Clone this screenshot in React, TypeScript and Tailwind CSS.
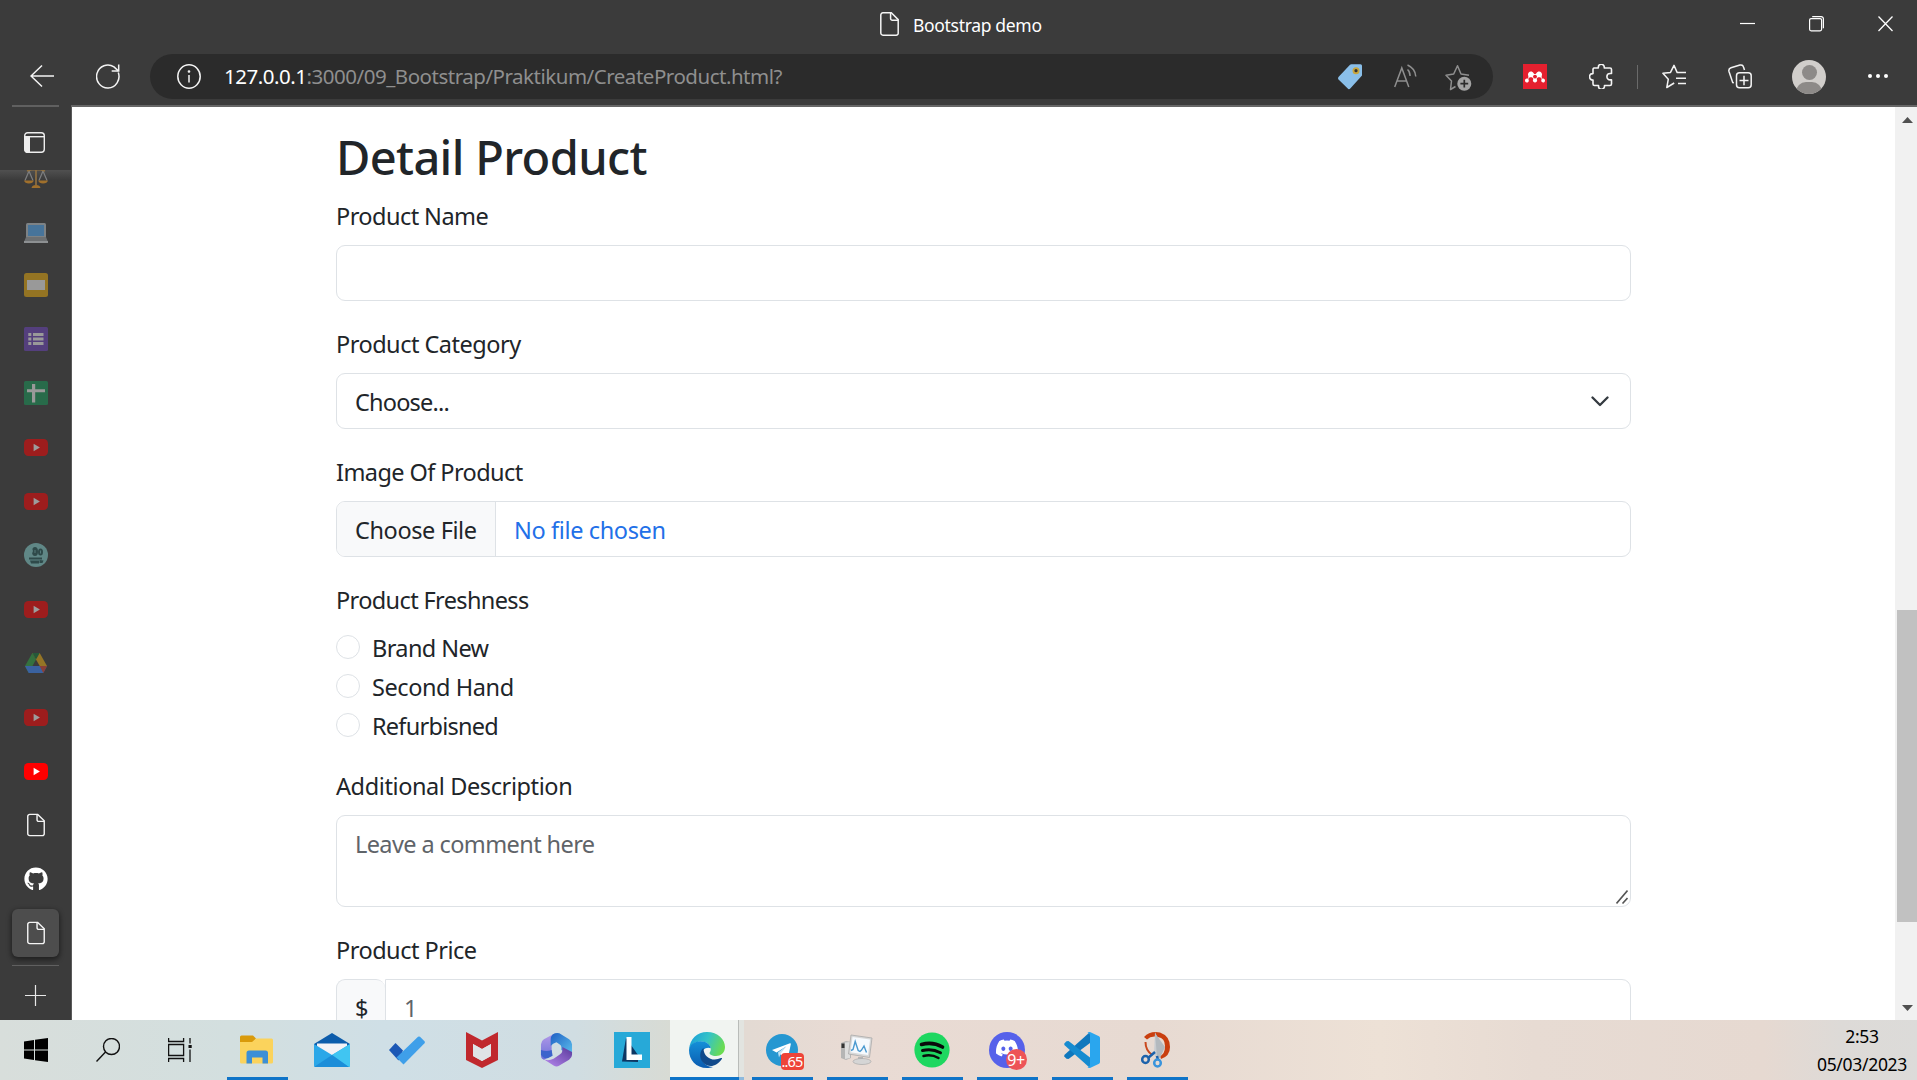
import React from "react";
import { FaDiscord, FaGithub, FaMendeley } from "react-icons/fa";

type IconProps = { className?: string };

const FileIcon = ({ className = "" }: IconProps) => (
  <svg className={className} viewBox="0 0 19 24" fill="none" stroke="#f4f4f4" strokeWidth="1.5">
    <path d="M3 .8h8.3L18.2 7.6V21a2 2 0 0 1-2 2.200H3a2.100 2.100 0 0 1-2.200-2.200V3A2.100 2.100 0 0 1 3 .8z" />
    <path d="M10.600.9v5.600a1.700 1.700 0 0 0 1.700 1.700h5.800" />
  </svg>
);

/* ---------- Title bar ---------- */

const TitleBar = () => (
  <div className="flex h-[49px] items-start">
    <div className="w-[880px]" />
    <FileIcon className="mt-3 h-6 w-[19px]" />
    <div className="ml-[14px] mt-[12px] w-[760px] text-[17.5px] leading-[26px] tracking-[-0.32px] text-white">
      Bootstrap demo
    </div>
    <div className="mt-[16px] ml-[67px] flex gap-[54px]">
      <svg className="h-4 w-[15px]" viewBox="0 0 15 16" stroke="#fff" strokeWidth="1.200">
        <path d="M0 7.500h15" />
      </svg>
      <svg className="h-4 w-[15px]" viewBox="0 0 15 16" fill="none" stroke="#fff" strokeWidth="1.200">
        <rect x=".6" y="2.600" width="12" height="12.200" rx="1.500" />
        <path d="M3.200.6h9a2.200 2.200 0 0 1 2.200 2.200v9.500" />
      </svg>
      <svg className="h-4 w-[15px]" viewBox="0 0 15 16" stroke="#fff" strokeWidth="1.300">
        <path d="M.5.5l14 14.500M14.500.5L.5 15" />
      </svg>
    </div>
  </div>
);

/* ---------- Address bar ---------- */

const AddressBar = () => (
  <div className="flex h-[56px] items-start pl-[30px] pt-[5px]">
    <svg className="mt-[10px] h-6 w-6" viewBox="0 0 24 24" fill="none" stroke="#f4f4f4" strokeWidth="1.500">
      <path d="M24 12H1M12 1.500L1 12l11 10.500" />
    </svg>
    <svg className="ml-[42px] mt-[10px] h-[25px] w-6" viewBox="0 0 24 25" fill="none" stroke="#f4f4f4" strokeWidth="1.500">
      <path d="M22.300 8.500A11.200 11.500 0 1 1 18 2.900l4.300 4" />
      <path d="M22.700.5v6.600h-7" />
    </svg>
    <div className="ml-[30px] flex h-[45px] w-[1343px] items-center rounded-full bg-[#2b2b2b] pl-[27px]">
      <svg className="h-[25px] w-6" viewBox="0 0 24 25" fill="none" stroke="#f4f4f4" strokeWidth="1.500">
        <ellipse cx="12" cy="12.500" rx="11.200" ry="11.700" />
        <path d="M12 11v7.500" />
        <circle cx="12" cy="7.500" r=".6" fill="#f4f4f4" />
      </svg>
      <div className="ml-[23px] -mt-[2px] w-[1114px] whitespace-nowrap text-[20.500px] leading-[30px] tracking-[-0.48px] text-[#8f8f8f]">
        <span className="text-white">127.0.0.1</span>:3000/09_Bootstrap/Praktikum/CreateProduct.html?
      </div>
      <svg className="h-[26px] w-6" viewBox="0 0 24 26">
        <path d="M12 .8Q12.500.3 13.500.3H22.500Q24 .3 24 1.800V11.500L12.500 24.300Q10.800 26 9.500 24.300L.5 15.500Q-.5 14 .7 12.700Z" fill="#8abfe9" />
        <circle cx="18" cy="6.700" r="3.500" fill="#c9a63d" />
        <circle cx="18" cy="6.700" r="1.600" fill="#333" />
      </svg>
      <svg className="ml-8 -mt-[2px] h-6 w-6" viewBox="0 0 24 24" fill="none" stroke="#8f8f8f" strokeWidth="1.500">
        <path d="M.7 23L7.800 4l7 19M3 17h9.700" />
        <path d="M13.500 5.500c1.500 1.300 2.600 3.700 2.600 6.500M13.500 1c4.500 2 8 6.500 8.300 11.500" />
      </svg>
      <svg className="ml-[27px] mt-px h-[27px] w-[27px]" viewBox="0 0 27 27" fill="none" stroke="#8f8f8f" strokeWidth="1.500">
        <path d="M10.500 22.500L5.500 25.500l1-8.500L1 11.300l7.700-1.300L12.500 1.800l3.500 8.200 8 1.200" strokeLinejoin="round" />
        <circle cx="19.300" cy="19.700" r="7" fill="#a3a3a3" stroke="none" />
        <path d="M19.300 15.800v7.800M15.400 19.700h7.800" stroke="#2b2b2b" strokeWidth="1.700" />
      </svg>
    </div>
    <div className="ml-[30px] mt-[10px] flex h-[25px] w-6 items-center justify-center bg-[#e5202f]">
      <FaMendeley className="size-5 text-white" />
    </div>
    <svg className="ml-[42px] mt-[10px] h-[25px] w-[24px]" viewBox="0 0 24 25" fill="none" stroke="#f4f4f4" strokeWidth="1.600" strokeLinejoin="round">
      <path d="M5 4h4.300v-.7a3 3 0 0 1 6 0V4H21a1.500 1.500 0 0 1 1.500 1.500V9.500h-1.400a3.200 3.200 0 0 0 0 6.400h1.400V20a1.500 1.500 0 0 1-1.500 1.500h-5.500v.7a3 3 0 0 1-6 0v-.7H5.500A1.500 1.500 0 0 1 4 20v-4h-.3a3.200 3.200 0 0 1 0-6.400H4V5.500A1.500 1.500 0 0 1 5 4z" />
    </svg>
    <div className="ml-[24px] mt-[11px] h-6 w-px bg-[#6a6a6a]" />
    <svg className="ml-[24px] mt-[10px] h-[25px] w-6" viewBox="0 0 24 25" fill="none" stroke="#f4f4f4" strokeWidth="1.500" strokeLinejoin="round">
      <path d="M12.200 19l-7.400 4.500 1.500-8.300L.9 9.300l7.600-.9L12 1.300l3.200 7.300H24M14 14.200h10M16 19.500h8" />
    </svg>
    <svg className="ml-[42px] mt-[10px] h-[26px] w-6" viewBox="0 0 24 26" fill="none" stroke="#f4f4f4" strokeWidth="1.500">
      <rect x="8.500" y="8.800" width="14.700" height="15" rx="3" />
      <path d="M16 11.800v9.500M11.500 16.500h9M5.700 19l-1-.6L1 7.500A3.200 3.200 0 0 1 3 3.700L12 1a2.800 2.800 0 0 1 3.500 2l1 3" />
    </svg>
    <div className="ml-[40px] mt-[6px] h-[34px] w-[34px] overflow-hidden rounded-full bg-[#d1cecb]">
      <div className="mx-auto mt-[5px] h-[15px] w-[15px] rounded-full bg-[#8d8a88]" />
      <div className="mx-auto mt-[2px] h-[20px] w-[26px] rounded-full bg-[#8d8a88]" />
    </div>
    <div className="ml-[42px] mt-[20px] flex gap-1">
      <i className="size-1 rounded-full bg-white" />
      <i className="size-1 rounded-full bg-white" />
      <i className="size-1 rounded-full bg-white" />
    </div>
  </div>
);

/* ---------- Vertical tabs ---------- */

const YouTube = ({ className = "" }: IconProps) => (
  <svg className={className} width="24" height="17" viewBox="0 0 24 17">
    <rect width="24" height="17" rx="4.500" fill="#f00" />
    <path d="M9.600 4.700v7.600l6.300-3.800z" fill="#fff" />
  </svg>
);

const Scales = () => (
  <svg width="24" height="20" viewBox="0 0 24 20" fill="none">
    <path d="M5 2L1 11.500M5 2l4 9.500M19 2l-4 9.500M19 2l4 9.500" stroke="#7e7f80" strokeWidth="1.200" />
    <path d="M3 2q9-3 18 0M12 1v15" stroke="#8f7042" strokeWidth="1.700" />
    <path d="M0 11.500h9.800q-.8 3-4.900 3t-4.900-3zM14.200 11.500H24q-.8 3-4.900 3t-4.900-3zM7.500 19q.5-3 4.500-3t4.500 3z" fill="#a0702c" />
  </svg>
);

const Laptop = () => (
  <svg width="24" height="20" viewBox="0 0 24 20">
    <path d="M3.500 0h17q1.500 0 1.500 1.500V14H2V1.500Q2 0 3.500 0z" fill="#7d8285" />
    <path d="M4 2h16v11H4z" fill="#47749a" />
    <path d="M2 14h20l2 5v1H0v-1z" fill="#6d7072" />
    <path d="M0 18h24v2H0z" fill="#8d9092" />
  </svg>
);

const Slides = () => (
  <svg width="24" height="24" viewBox="0 0 24 24">
    <rect width="24" height="24" rx="2.500" fill="#947423" />
    <path d="M3 7h18v10H3z" fill="#999" />
  </svg>
);

const Forms = () => (
  <svg width="24" height="24" viewBox="0 0 24 24">
    <rect width="24" height="24" rx="1.500" fill="#543f7d" />
    <path d="M4.300 6h3v3h-3zM9 6h10.500v3H9zM4.300 10.500h3v3h-3zM9 10.500h10.500v3H9zM4.300 15h3v3h-3zM9 15h10.500v3H9z" fill="#999" />
  </svg>
);

const Sheets = () => (
  <svg width="24" height="24" viewBox="0 0 24 24">
    <rect width="24" height="24" rx="1.500" fill="#286b4a" />
    <path d="M8 3h3.200v5.200h9.800v3H11.200V21.500H8V11.200H3v-3h5z" fill="#999" />
  </svg>
);

const Camera = () => (
  <svg width="24" height="24" viewBox="0 0 24 24">
    <circle cx="12" cy="12" r="12" fill="#608786" />
    <ellipse cx="11" cy="8.500" rx="3" ry="4.500" fill="#2f4a4a" />
    <ellipse cx="16.500" cy="9" rx="2.500" ry="3.500" fill="#2f4a4a" />
    <path d="M8.500 6.500v3M11 7v3M16.500 7.500v3" stroke="#608786" strokeWidth=".8" />
    <path d="M5 14.500h13v2H5zM6 17.500h9v3H7zM15.500 17l4 .5-1 2.500h-3z" fill="#2f4a4a" />
  </svg>
);

const Drive = () => (
  <svg width="22" height="20" viewBox="0 0 22 20">
    <path d="M7.300 0L0 13l3.700 7L11 6.500z" fill="#34713f" />
    <path d="M7.300 0h7.400L22 13h-7.300z" fill="#957526" />
    <path d="M7.300 0h7.400L11 6.500z" fill="#25593a" />
    <path d="M0 13h22l-3.700 7H3.700z" fill="#3a62a0" />
    <path d="M14.700 13H22l-3.700 7z" fill="#8c3f37" />
  </svg>
);

const dimYouTube = <YouTube className="opacity-50" />;

const tabs: React.ReactNode[] = [
  <div className="pt-1"><Scales /></div>,
  <div className="pt-1"><Laptop /></div>,
  <Slides />,
  <Forms />,
  <Sheets />,
  dimYouTube,
  dimYouTube,
  <Camera />,
  dimYouTube,
  <Drive />,
  dimYouTube,
  <YouTube />,
  <FileIcon className="h-6 w-[18px]" />,
  <FaGithub className="size-6 text-white" />,
];

const TabStrip = () => (
  <aside className="flex w-[72px] flex-col border-r border-[#5a5a5a] bg-[#3b3b3b]">
    <div className="flex h-[63px] flex-col">
      <div className="ml-3 -mt-[2px] h-[2px] w-[47px] bg-[#606060]" />
      <svg className="ml-6 mt-[25px]" width="21" height="21" viewBox="0 0 21 21" fill="none" stroke="#eee" strokeWidth="1.400">
        <rect x=".7" y=".7" width="19.600" height="19.600" rx="3" />
        <path d="M.7 4.700h19.600" />
        <path d="M1 5h4.300v15.300H3Q1 20 1 18z" fill="#eee" />
      </svg>
    </div>
    <div className="h-[794px] overflow-hidden bg-[linear-gradient(#505050,#3b3b3b_10px)]">
      <div className="-mt-5 flex flex-col">
        {tabs.map((icon, i) => (
          <div key={i} className="flex h-[54px] items-center justify-center">
            {icon}
          </div>
        ))}
        <div className="mx-auto mt-[3px] flex h-12 w-[47px] items-center justify-center rounded-md bg-[#4d4d4d] shadow-[0_2px_5px_1px_rgba(0,0,0,0.45)]">
          <FileIcon className="ml-px h-6 w-[18px]" />
        </div>
      </div>
    </div>
    <div className="ml-3 mt-px h-px w-[47px] bg-[#606060]" />
    <svg className="ml-[25px] mt-[19px]" width="21" height="21" viewBox="0 0 21 21" stroke="#e8e8e8" strokeWidth="1.200">
      <path d="M10.500 0v21M0 10.500h21" />
    </svg>
  </aside>
);

/* ---------- Page ---------- */

const Label = ({ children, className = "" }: { children: React.ReactNode; className?: string }) => (
  <div className={`mb-3 h-9 leading-[38px] ${className}`}>{children}</div>
);

const box = "rounded-[9px] border border-[#dee2e6]";

const freshness = [
  { name: "Brand New", spacing: "tracking-[-0.6px]" },
  { name: "Second Hand", spacing: "tracking-[-0.42px]" },
  { name: "Refurbisned", spacing: "tracking-[-0.75px]" },
];

const Page = () => (
  <main className="flex h-[913px] flex-1 overflow-hidden bg-white text-[23.500px] tracking-[-0.5px] text-[#212529]">
    <div className="ml-[264px] w-[1295px] pt-5">
      <h1 className="mb-3 h-[58px] whitespace-nowrap text-[47px] font-medium leading-[60px] tracking-[-0.65px]">Detail Product</h1>

      <Label className="tracking-[-0.55px]">Product Name</Label>
      <div className={`${box} mb-6 h-14`} />

      <Label>Product Category</Label>
      <div className={`${box} mb-6 flex h-14 items-center justify-between pl-[18px] pr-[21px]`}>
        <span className="pt-[3px] tracking-[-0.8px]">Choose...</span>
        <svg width="18" height="11" viewBox="0 0 18 11" fill="none" stroke="#343a40" strokeWidth="2.300" strokeLinecap="round" strokeLinejoin="round">
          <path d="M1.500 1.500L9 9l7.500-7.500" />
        </svg>
      </div>

      <Label className="tracking-[-0.58px]">Image Of Product</Label>
      <div className={`${box} mb-6 flex h-14 overflow-hidden leading-[56px]`}>
        <span className="w-[159px] whitespace-nowrap border-r border-[#dee2e6] bg-[#f8f9fa] pl-[18px] tracking-[-0.4px]">Choose File</span>
        <span className="pl-[18px] tracking-[-0.37px] text-[#2270e8]">No file chosen</span>
      </div>

      <Label className="tracking-[-0.63px]">Product Freshness</Label>
      {freshness.map(({ name, spacing }) => (
        <div key={name} className={`mb-[3px] flex h-9 leading-[38px] ${spacing}`}>
          <i className="mr-3 mt-[6px] size-6 rounded-full border border-[#dee2e6]" />
          {name}
        </div>
      ))}

      <div className="h-[21px]" />
      <Label className="tracking-[-0.4px]">Additional Description</Label>
      <div className={`${box} mb-6 flex h-[92px] items-end justify-between pl-[18px]`}>
        <span className="self-start pt-[10px] leading-9 tracking-[-0.6px] text-[#5f6469]">Leave a comment here</span>
        <svg className="mb-[2px] mr-[2px]" width="12" height="14" viewBox="0 0 12 14" stroke="#555" strokeWidth="1.600">
          <path d="M.5 13.500L11.500.5M6.500 13.500L11.500 8" />
        </svg>
      </div>

      <Label>Product Price</Label>
      <div className="flex h-14 leading-[57px]">
        <span className="w-[49px] rounded-l-[9px] rounded-tr-[9px] border border-r-0 border-[#dee2e6] bg-[#f8f9fa] pl-[18px]">$</span>
        <span className="flex-1 rounded-r-[9px] border border-[#dee2e6] pl-[18px] text-[#5f6469]">1</span>
      </div>
    </div>
    <div className="ml-auto flex w-[22px] flex-col bg-[#f1f1f1] pl-[2px]">
      <svg className="ml-[5px] mt-[10px]" width="11" height="6" viewBox="0 0 11 6"><path d="M5.500 0L11 6H0z" fill="#505050" /></svg>
      <div className="mt-[487px] h-[312px] bg-[#c1c1c1]" />
      <svg className="ml-[5px] mt-[83px]" width="11" height="6" viewBox="0 0 11 6"><path d="M5.500 6L11 0H0z" fill="#505050" /></svg>
    </div>
  </main>
);

/* ---------- Taskbar ---------- */

const Explorer = () => (
  <svg width="34" height="34" viewBox="0 0 34 34">
    <path d="M0 4Q0 2.500 1.500 2.500H13l3 3-3 4H0z" fill="#d99a0b" />
    <path d="M0 9h12l4-3.500h15.500Q33 5.500 33 7V29q0 1.500-1.500 1.500H1.500Q0 30.500 0 29z" fill="#fbd35c" />
    <path d="M6.500 30.500V20q0-2.500 2.500-2.500h16.500q2.500 0 2.500 2.500v10.500h-5.500v-6H12v6z" fill="#3c8fd6" />
  </svg>
);

const Mail = () => (
  <svg width="36" height="34" viewBox="0 0 36 34">
    <path d="M0 11L18 0l18 11v10H0z" fill="#0c5cab" />
    <path d="M3 10.500h30v13H3z" fill="#f3f2f6" />
    <path d="M0 11l18 11L36 11v21.500q0 1.500-1.500 1.500h-33Q0 34 0 32.500z" fill="#2ba7e8" />
    <path d="M36 11v21.500q0 1.500-1.500 1.500L18 22z" fill="#40c5f2" />
    <path d="M0 34l18-12 17 12z" fill="#1c8ed9" />
  </svg>
);

const Todo = () => (
  <svg width="36" height="29" viewBox="0 0 36 29">
    <path d="M0 14l6.500-7L14 14.500l-4.500 10z" fill="#1b57b5" />
    <path d="M7.500 21.500L29 .8q1-.8 2 0l4.500 4.500q.8 1 0 2L14.500 28.500z" fill="#3f9fe9" />
  </svg>
);

const Shield = () => (
  <svg width="32" height="36" viewBox="0 0 32 36">
    <path d="M0 0l16 8.500L32 0v28l-16 8L0 28zM7 12v12l9 5 9-5V12l-9 5z" fill="#c0282d" fillRule="evenodd" />
    <path d="M7 12v12l9 5 9-5V12l-9 5z" fill="#dfe3e6" />
  </svg>
);

const Office = () => (
  <svg width="33" height="36" viewBox="0 0 34 36">
    <defs>
      <linearGradient id="of1" x1="0" y1="0" x2="0" y2="1"><stop stopColor="#b49ae8" /><stop offset="1" stopColor="#6a70d8" /></linearGradient>
      <linearGradient id="of2" x1="0" y1="0" x2="1" y2="1"><stop stopColor="#1f5fc4" /><stop offset="1" stopColor="#5ec3ee" /></linearGradient>
      <linearGradient id="of3" x1="0" y1="1" x2="1" y2="0"><stop stopColor="#b98af0" /><stop offset="1" stopColor="#5a3a9c" /></linearGradient>
    </defs>
    <path d="M15 1L4 7Q1 9 1 12v12q0 3 3 4l8-4V13q0-3 5-5z" fill="url(#of1)" />
    <path d="M13 2q5-3 9 0l8 5q3 2 3 5v12L22 18v-3q0-2-2-3l-3-2q-4 1-6 4V7q0-3 2-5z" fill="url(#of2)" />
    <path d="M3 27l11 7q3 2 6 0l10-6q3-2 3-5v-3l-10-5v4q0 2-3 4l-6 4q-6 3-11 0z" fill="url(#of3)" />
    <path d="M1 23q3 5 8 3l4-2-1-6q-5 2-11 0z" fill="#3c64cc" />
  </svg>
);

const LetterL = () => (
  <svg width="36" height="36" viewBox="0 0 36 36">
    <path d="M0 0h36v36H0z" fill="#27a9d8" />
    <path d="M12 6L8 29.500l16 .5V23z" fill="#0d3763" />
    <path d="M12.500 5h5v17.500H28V28H12.500z" fill="#fff" />
  </svg>
);

const EdgeLogo = () => (
  <svg width="36" height="36" viewBox="0 0 36 36">
    <defs>
      <linearGradient id="ed1" x1="0" y1=".2" x2="1" y2=".5"><stop stopColor="#1a9fdb" /><stop offset=".5" stopColor="#35c3c6" /><stop offset="1" stopColor="#6bdc50" /></linearGradient>
      <linearGradient id="ed2" x1="0" y1="0" x2="0" y2="1"><stop stopColor="#1590d8" /><stop offset="1" stopColor="#0a5bb0" /></linearGradient>
    </defs>
    <path d="M0 17.500C1 7 8 0 18 0c11 0 18 7.500 18 15 0 6-4.500 9-9 9-4.500 0-6.500-1.800-6.500-3 0-.8 1.300-1.300 1.300-4C21.800 13 17.500 9.500 12 9.500 5 9.500 1 14 0 17.500z" fill="url(#ed1)" />
    <path d="M0 18C.5 13 5 9.300 11.500 9.300c6 0 10 3.500 10.300 7-4-1.800-10 1.200-9.500 8C12.700 31 18 35 24 35c-2 .8-4 1-6 1C7 36 0 28 0 18z" fill="url(#ed2)" />
    <path d="M14.500 16c-4 3-4.500 10-.5 14.500 4.500 5 13 5.500 19-3.700.3-.6-.3-1-1-.7C24 30 14.500 26 14.500 16z" fill="#114a8b" />
  </svg>
);

const Telegram = () => (
  <div className="relative">
    <svg width="32" height="32" viewBox="0 0 32 32">
      <circle cx="16" cy="16" r="16" fill="#2697d1" />
      <path d="M6 16L24 9.300q1-.2.8 1L22 23.500q-.4 1-1.400.4L12.800 19.500 20 12.500l-9.500 6z" fill="#fff" />
      <path d="M12 18.500l8.500-6.500-6 8-1.500 3.500z" fill="#c5e2f2" />
    </svg>
    <div className="absolute left-[15px] top-[19px] flex h-[17px] w-[23px] items-center justify-center rounded bg-[#ee4438] text-[14.5px] tracking-[-0.8px] text-white">..65</div>
  </div>
);

const Monitor = () => (
  <svg width="34" height="32" viewBox="0 0 34 32">
    <path d="M1 9l5-2 5 1v16l-5 2-5-2z" fill="#b5b5b5" />
    <path d="M5 8.500l5-.5v16l-5 1z" fill="#dedede" />
    <path d="M1.500 9.500h3V14h-3z" fill="#333" />
    <path d="M11 1l21 3-2.500 19.500L8.500 20z" fill="#d9d9d9" stroke="#a9a9a9" strokeWidth=".8" />
    <path d="M12.500 3l17.500 2.600-2 15.400-17.500-2.800z" fill="#f6fafe" />
    <path d="M11 16.500l2-1 2.200-8 3 9 1.800 1 1.500-1.500L24 12l2.500 6.500" fill="none" stroke="#4b9ad0" strokeWidth="1.400" />
    <path d="M18 23h5v4h-5z" fill="#b5b5b5" />
    <ellipse cx="22" cy="27.500" rx="9" ry="3" fill="#d5d5d5" stroke="#a9a9a9" strokeWidth=".7" />
  </svg>
);

const Spotify = () => (
  <svg width="36" height="36" viewBox="0 0 36 36" fill="none" stroke="#0a0a0a" strokeLinecap="round">
    <circle cx="18" cy="18" r="17.600" fill="#1ed760" stroke="none" />
    <path d="M7.500 12.500q11-3.200 21 2.500" strokeWidth="3.600" />
    <path d="M8.500 18.500q9.500-2.500 18 2.300" strokeWidth="3" />
    <path d="M9.500 24q8-2 15 2" strokeWidth="2.500" />
  </svg>
);

const Discord = () => (
  <div className="relative flex size-9 items-center justify-center rounded-full bg-[#5661ea]">
    <FaDiscord className="-mt-1 size-[24px] text-white" />
    <div className="absolute left-[17px] top-[17px] flex size-[21px] items-center justify-center rounded-full bg-[#ed5457] text-[16px] tracking-[-0.5px] text-white">9+</div>
  </div>
);

const VSCode = () => (
  <svg width="36" height="36" viewBox="0 0 36 36">
    <path d="M26 0v11L4.500 27 2.500 26.800l-2.200-2.300V23z" fill="#0f77bd" />
    <path d="M.3 13V11.500l2.200-2.300L4.500 9 26 25.500V36L.3 13z" fill="#168bd0" />
    <path d="M26 0l9 4.200q1 .6 1 1.800v24q0 1.200-1 1.800L26 36q-1.500.2-2.500-1 2.500 0 2.500-2V3q0-2-2.500-2 1-1.200 2.500-1z" fill="#2aa6ee" />
  </svg>
);

const Snip = () => (
  <svg width="32" height="36" viewBox="0 0 32 36" fill="none">
    <path d="M3 5Q9-1.500 19 .5 29 4 29 15q0 9-9 12l-1-3q5-2 5-10 0-8-7-9Q10 3.500 6 7.500z" fill="#c93f0f" />
    <path d="M4.500 10q0 9 7 13" stroke="#c9481d" strokeWidth="2" />
    <path d="M14 0l3.500 9 .5 13-3 4-2-4z" fill="#c8ccd0" />
    <path d="M14 1l10 14-5 11-3-1z" fill="#b3b9be" />
    <path d="M14 20L7 26M16 24l1 4" stroke="#1c62ab" strokeWidth="2.500" />
    <ellipse cx="4.500" cy="27.500" rx="3.300" ry="3.500" stroke="#1c62ab" strokeWidth="2.500" />
    <ellipse cx="16.500" cy="31" rx="3.300" ry="3.500" stroke="#3a94dc" strokeWidth="2.500" />
  </svg>
);

const apps: { icon: React.ReactNode; state?: "open" | "active" }[] = [
  { icon: <Explorer />, state: "open" },
  { icon: <Mail /> },
  { icon: <Todo /> },
  { icon: <Shield /> },
  { icon: <Office /> },
  { icon: <LetterL /> },
  { icon: <EdgeLogo />, state: "active" },
  { icon: <Telegram />, state: "open" },
  { icon: <Monitor />, state: "open" },
  { icon: <Spotify />, state: "open" },
  { icon: <Discord />, state: "open" },
  { icon: <VSCode />, state: "open" },
  { icon: <Snip />, state: "open" },
];

const Taskbar = () => (
  <footer className="flex h-[60px] bg-[linear-gradient(90deg,#d8dedb_0%,#d3dfdf_12%,#cfdfe6_20%,#d0dde2_30%,#d8dbd4_35%,#e3dad3_39%,#e9dbd4_45%,#e7dad2_60%,#ede1d6_72%,#e7dbd3_80%,#e6d9d1_92%,#dddad7_96%,#dcdbd9_100%)] text-black">
    <div className="flex w-[220px] items-center gap-12 pl-6">
      <svg width="24" height="24" viewBox="0 0 24 24">
        <path d="M0 3.500L10 2v9.500H0zM11 1.800L24 0v11.500H11zM0 12.500h10V22L0 20.500zM11 12.500h13V24l-13-1.800z" />
      </svg>
      <svg width="24" height="24" viewBox="0 0 24 24" fill="none" stroke="#111" strokeWidth="1.400">
        <ellipse cx="15.500" cy="8.500" rx="8" ry="8" />
        <path d="M9.500 14L.5 23.500" />
      </svg>
      <svg width="24" height="24" viewBox="0 0 24 24" fill="none" stroke="#111" strokeWidth="1.300">
        <path d="M.6 6.500h15v11H.6zM.6 0v3.500h15V0M.6 24v-3.500h15V24M22 0v5.500M22 11.500V24" />
        <path d="M20.500 7h3.200v3h-3.200z" fill="#111" stroke="none" />
      </svg>
    </div>
    {apps.map(({ icon, state }, i) =>
      state === "active" ? (
        <div key={i} className="flex h-[60px] w-[75px] bg-[#e2e4e0] bg-clip-content pr-px">
          <div className="flex w-[69px] flex-col items-center border-r border-[#b9bcb9] bg-[#f1f4f1]">
            <div className="flex h-[57px] items-center pl-[5px] pt-[3px]">{icon}</div>
            <div className="h-[3px] w-[69px] bg-[#0f74c8]" />
          </div>
          <div className="mt-[57px] h-[3px] flex-1 bg-[#8db9dd]" />
        </div>
      ) : (
        <div key={i} className="flex w-[75px] flex-col items-center">
          <div className="flex h-[57px] items-center pr-[2px] pt-[3px]">{icon}</div>
          {state === "open" && <div className="h-[3px] w-[61px] bg-[#0f74c8]" />}
        </div>
      ),
    )}
    <div className="ml-auto mr-[7px] flex w-[96px] flex-col items-center pt-[2px] text-[17.5px] leading-7 tracking-[-0.3px]">
      <span>2:53</span>
      <span>05/03/2023</span>
    </div>
  </footer>
);

export default function App() {
  return (
    <div className="flex h-[1080px] w-[1917px] flex-col overflow-hidden bg-[#3b3b3b] font-['Noto_Sans','Open_Sans',sans-serif]">
      <TitleBar />
      <AddressBar />
      <div className="flex flex-col">
        <div className="ml-[71px] h-[2px] bg-[#666]" />
        <div className="flex h-[913px]">
          <TabStrip />
          <Page />
        </div>
      </div>
      <Taskbar />
    </div>
  );
}
